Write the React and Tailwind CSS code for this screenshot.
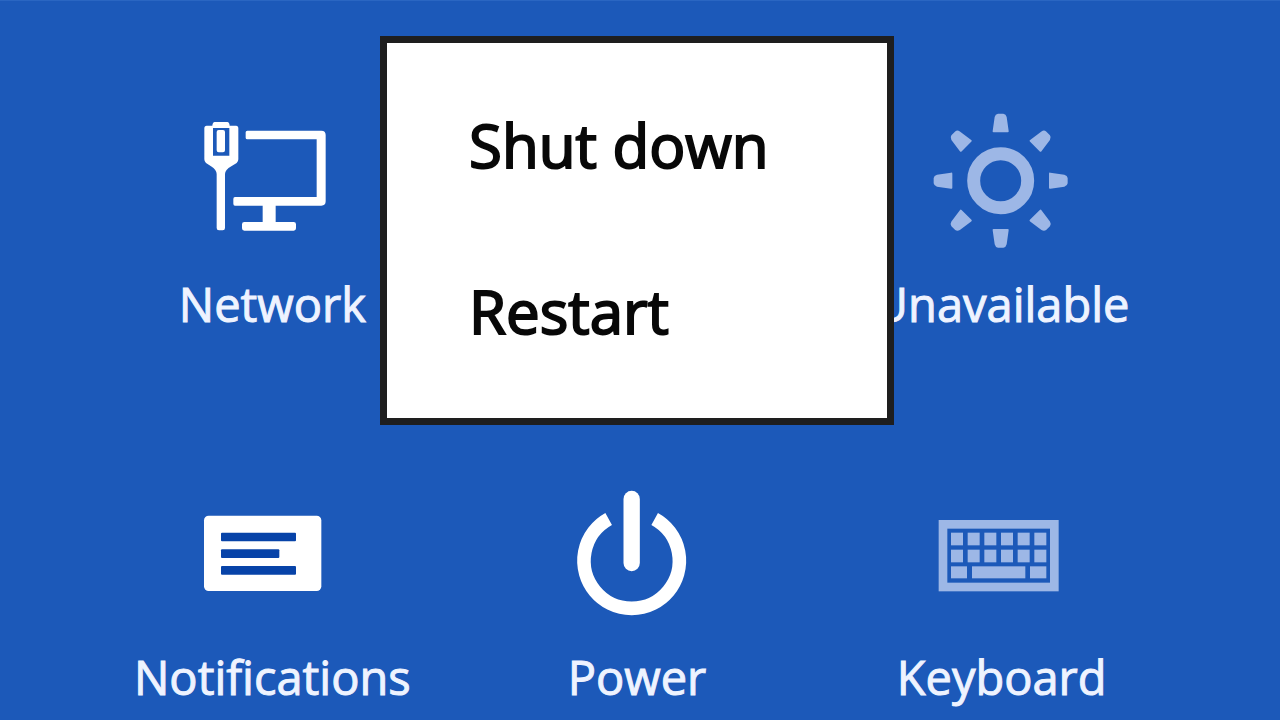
function NetworkIcon() {
  return (
    <svg viewBox="6 0 480 420" className="h-[140px] w-40" aria-hidden="true">
      <path
        fill="#fff"
        fillRule="evenodd"
        d="M74 36H112Q118 36 119 47H138Q145 47 145 55V148Q145 155 140 159L124 169Q105 180 105 192V354Q105 361 98 361H87Q80 361 80 354V192Q80 180 63 169L48 159Q43 155 43 148V55Q43 47 50 47H67Q68 36 74 36ZM69 54V137H118V54ZM80 66Q80 60 86 60H99Q105 60 105 66V121Q105 127 99 127H86Q80 127 80 121Z"
      />
      <path
        fill="#fff"
        d="M172 62H394Q407 62 407 75V274Q407 287 394 287H257V336H311Q318 336 318 343V355Q318 362 311 362H163Q156 362 156 355V343Q156 336 163 336H218V287H135Q130 287 130 281V267Q130 261 135 261H380V88H172Q167 88 167 83V67Q167 62 172 62Z"
      />
    </svg>
  );
}

function BrightnessIcon() {
  return (
    <svg viewBox="6 30 480 420" className="h-[140px] w-40" aria-hidden="true">
      <circle cx="242" cy="242" r="81" fill="none" stroke="#9db7e6" strokeWidth="39" />
      {[0, 45, 90, 135, 180, 225, 270, 315].map((angle) => (
        <path
          key={angle}
          fill="#9db7e6"
          transform={`rotate(${angle} 242 242)`}
          d="M234 41H250Q258 42 260 51L266 93Q267 97 263 97H221Q217 97 218 93L224 51Q226 42 234 41Z"
        />
      ))}
    </svg>
  );
}

function NotificationsIcon() {
  return (
    <svg viewBox="6 -51 480 420" className="h-[140px] w-40" aria-hidden="true">
      <rect x="42" y="47" width="352" height="226" rx="14" fill="#fff" />
      <g fill="#0743a8">
        <rect x="93" y="98" width="225" height="26" rx="3" />
        <rect x="93" y="148" width="175" height="26" rx="3" />
        <rect x="93" y="198" width="225" height="26" rx="3" />
      </g>
    </svg>
  );
}

function PowerIcon() {
  return (
    <svg viewBox="-9 9 480 420" className="h-[140px] w-40" aria-hidden="true">
      <path d="M146 117A143 143 0 1 0 284 117" fill="none" stroke="#fff" strokeWidth="41" />
      <path d="M215 57V249" stroke="#fff" strokeWidth="49" strokeLinecap="round" />
    </svg>
  );
}

function KeyboardIcon() {
  const columns = [78, 128, 178, 228, 278, 328];
  return (
    <svg viewBox="-9 -66 480 420" className="h-[140px] w-40" aria-hidden="true">
      <rect x="54" y="58" width="334" height="188" fill="none" stroke="#9db7e6" strokeWidth="26" />
      <g fill="#9db7e6">
        {columns.map((x) => (
          <rect key={`a${x}`} x={x} y="83" width="36" height="38" />
        ))}
        {columns.map((x) => (
          <rect key={`b${x}`} x={x} y="134" width="36" height="38" />
        ))}
        <rect x="78" y="184" width="48" height="36" />
        <rect x="141" y="184" width="160" height="36" />
        <rect x="315" y="184" width="49" height="36" />
      </g>
    </svg>
  );
}

function Tile({ label, icon, disabled }) {
  return (
    <button
      type="button"
      disabled={disabled}
      className="flex flex-col items-center gap-6 text-[47px] leading-[60px] whitespace-nowrap text-[#eef3ff] [-webkit-text-stroke:1px_currentColor]"
    >
      {icon}
      <span>{label}</span>
    </button>
  );
}

function PowerMenu() {
  return (
    <div
      role="menu"
      aria-label="Power"
      className="absolute -top-[74px] left-1/2 flex w-[514px] -translate-x-1/2 flex-col gap-[86px] border-[7px] border-[#1e1e1e] bg-white px-[82px] pt-[62px] pb-[67px] text-[60px] leading-[80px] whitespace-nowrap text-[#080808] [-webkit-text-stroke:2px_currentColor]"
    >
      <button type="button" role="menuitem" className="text-left">
        Shut down
      </button>
      <button type="button" role="menuitem" className="text-left">
        Restart
      </button>
    </div>
  );
}

export default function App() {
  return (
    <main className="h-screen overflow-hidden border-t border-[#2a66c2] bg-[#1c59b9] pt-[109px] pr-[96px] pl-[90px] font-['Open_Sans','Noto_Sans',sans-serif]">
      <div className="grid grid-cols-3 gap-y-[149px]">
        <Tile label="Network" icon={<NetworkIcon />} />
        <div className="relative z-10">
          <PowerMenu />
        </div>
        <Tile label="Unavailable" icon={<BrightnessIcon />} disabled />
        <Tile label="Notifications" icon={<NotificationsIcon />} />
        <Tile label="Power" icon={<PowerIcon />} />
        <Tile label="Keyboard" icon={<KeyboardIcon />} disabled />
      </div>
    </main>
  );
}
